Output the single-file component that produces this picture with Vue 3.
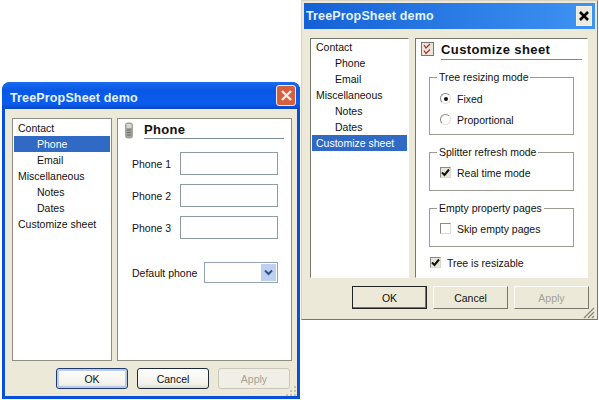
<template>
  <div class="desk">
    <!-- XP themed window -->
    <div class="win win--xp">
      <header class="win__title">
        <span class="win__caption">TreePropSheet demo</span>
        <button class="close close--xp" type="button">
          <svg width="13" height="13" viewBox="0 0 13 13"><path d="M2 2l9 9M11 2l-9 9" stroke="#fbe9e0" stroke-width="2.4" fill="none" /></svg>
        </button>
      </header>
      <div class="win__body">
        <div class="panes">
          <ul class="tree">
            <li v-for="item in tree" :key="item.label" class="tree__item" :class="{ 'tree__item--sub': item.sub, 'tree__item--active': item.label === 'Phone' }">
              {{ item.label }}
            </li>
          </ul>
          <div class="page">
            <div class="page__head">
              <svg class="page__icon" width="10" height="17" viewBox="0 0 10 17">
                <rect x="1" y="0.5" width="8" height="16" rx="3" fill="#a5a29b" />
                <rect x="2.5" y="2" width="5" height="4" fill="#d9d7d0" />
                <path d="M3 8h4M3 10.500h4M3 13h4" stroke="#6f6d68" stroke-width="1" />
              </svg>
              <h3 class="page__title">Phone</h3>
            </div>
            <div class="phones">
              <div v-for="n in 3" :key="n" class="phone-row">
                <label>Phone {{ n }}</label>
                <span class="input"></span>
              </div>
            </div>
            <div class="default-row">
              <label>Default phone</label>
              <span class="combo">
                <span class="combo__btn">
                  <svg width="9" height="7" viewBox="0 0 9 7"><path d="M1 1.500l3.500 3.500l3.500-3.500" stroke="#33508f" stroke-width="2" fill="none" /></svg>
                </span>
              </span>
            </div>
          </div>
        </div>
        <div class="buttons buttons--xp">
          <button type="button" class="btn btn--default">OK</button>
          <button type="button" class="btn">Cancel</button>
          <button type="button" class="btn btn--off">Apply</button>
        </div>
        <svg class="grip" width="12" height="12" viewBox="0 0 12 12">
          <path d="M9 2h2v2h-2zM5 6h2v2h-2zM9 6h2v2h-2zM1 10h2v2h-2zM5 10h2v2h-2zM9 10h2v2h-2z" fill="#c5c2b2" />
        </svg>
      </div>
    </div>

    <!-- classic themed window -->
    <div class="win win--classic">
      <header class="win__title">
        <span class="win__caption">TreePropSheet demo</span>
        <button class="close close--classic" type="button">
          <svg width="12" height="12" viewBox="0 0 12 12"><path d="M2 2l8 8M10 2l-8 8" stroke="#000" stroke-width="2.600" fill="none" /></svg>
        </button>
      </header>
      <div class="win__body">
        <div class="panes">
          <ul class="tree tree--sunken">
            <li v-for="item in tree" :key="item.label" class="tree__item" :class="{ 'tree__item--sub': item.sub, 'tree__item--active': item.label === 'Customize sheet' }">
              {{ item.label }}
            </li>
          </ul>
          <div class="page page--sunken">
            <div class="page__head">
              <svg class="page__icon" width="13" height="14" viewBox="0 0 13 14">
                <rect x="0.500" y="0.500" width="12" height="13" fill="#e9e6dc" stroke="#77746c" />
                <path d="M3 3l2 3l4-4M3 8.500l2 3l4-4" stroke="#a8343a" stroke-width="1.300" fill="none" />
              </svg>
              <h3 class="page__title">Customize sheet</h3>
            </div>
            <fieldset class="group group--tall">
              <legend>Tree resizing mode</legend>
              <div class="opt"><span class="radio radio--on"></span>Fixed</div>
              <div class="opt"><span class="radio"></span>Proportional</div>
            </fieldset>
            <fieldset class="group">
              <legend>Splitter refresh mode</legend>
              <div class="opt">
                <span class="check">
                  <svg width="9" height="9" viewBox="0 0 9 9"><path d="M1 4.500l2.500 2.500l4.500-5.500" stroke="#111" stroke-width="2" fill="none" /></svg>
                </span>
                Real time mode
              </div>
            </fieldset>
            <fieldset class="group">
              <legend>Empty property pages</legend>
              <div class="opt"><span class="check check--off"></span>Skip empty pages</div>
            </fieldset>
            <div class="opt opt--plain">
              <span class="check">
                <svg width="9" height="9" viewBox="0 0 9 9"><path d="M1 4.500l2.500 2.500l4.500-5.500" stroke="#111" stroke-width="2" fill="none" /></svg>
              </span>
              Tree is resizable
            </div>
          </div>
        </div>
        <div class="buttons buttons--classic">
          <button type="button" class="btn btn--default">OK</button>
          <button type="button" class="btn">Cancel</button>
          <button type="button" class="btn btn--off">Apply</button>
        </div>
        <svg class="grip" width="13" height="13" viewBox="0 0 13 13">
          <path d="M12 2L2 12M12 6L6 12M12 10L10 12" stroke="#8a8778" stroke-width="1.300" fill="none" />
        </svg>
      </div>
    </div>
  </div>
</template>

<script setup>
const tree = [
  { label: "Contact" },
  { label: "Phone", sub: true },
  { label: "Email", sub: true },
  { label: "Miscellaneous" },
  { label: "Notes", sub: true },
  { label: "Dates", sub: true },
  { label: "Customize sheet" }
];
</script>

<style>
html,
body {
  background: #fff;
}
</style>

<style scoped>
.desk {
  position: relative;
  width: 599px;
  height: 400px;
  overflow: hidden;
  font-family: "Liberation Sans", Arial, sans-serif;
  font-size: 10.500px;
  color: #111;
}

.win {
  position: absolute;
  display: flex;
  flex-direction: column;
  box-sizing: border-box;
}

.win--xp {
  left: 2px;
  top: 82px;
  width: 298px;
  height: 317px;
  border-radius: 8px 8px 0 0;
  background: #0a4fd8;
  padding: 0 3px 3px;
}

.win--classic {
  left: 301px;
  top: 0;
  width: 297px;
  height: 320px;
  background: #ece9d8;
  border: 1px solid #d8d5c6;
  border-right-color: #77766c;
  border-bottom-color: #77766c;
  padding: 2px 2px 0;
}

.win__title {
  display: flex;
  align-items: center;
  justify-content: space-between;
  flex: none;
}

.win--xp .win__title {
  height: 27px;
  padding: 0 4px 0 8px;
  margin: 0 -3px;
  border-radius: 8px 8px 0 0;
  background: linear-gradient(#1a6cf0, #0a57e4 30%, #0a5cf0 80%, #0a48c4);
}

.win--xp .win__caption {
  padding-top: 4px;
}

.win--classic .win__title {
  height: 26px;
  padding: 0 3px 0 2px;
  background: linear-gradient(90deg, #1461d6, #3f93f2);
}

.win__caption {
  font-size: 12.500px;
  font-weight: 700;
  letter-spacing: 0.150px;
  color: #e4f4ff;
}

.close {
  display: flex;
  align-items: center;
  justify-content: center;
  padding: 0;
  box-sizing: border-box;
}

.close--xp {
  width: 20px;
  height: 21px;
  border: 1px solid #eee;
  border-radius: 3px;
  background: #d5603f;
}

.close--classic {
  width: 16px;
  height: 20px;
  border: 1px solid #f4f2e8;
  background: #eceadf;
}

.win__body {
  position: relative;
  flex: 1;
  display: flex;
  flex-direction: column;
  background: #ece9d8;
  min-height: 0;
}

.win--xp .win__body {
  padding: 9px 5px 0 7px;
}

.win--classic .win__body {
  padding: 9px 7px 0 6px;
}

.panes {
  display: flex;
  gap: 5px;
}

.win--xp .panes {
  height: 243px;
}

.win--classic .panes {
  height: 240px;
  gap: 6px;
}

.tree {
  list-style: none;
  margin: 0;
  padding: 1px;
  flex: none;
  box-sizing: border-box;
  background: #fff;
  border: 1px solid #8d8d85;
}

.win--xp .tree {
  width: 100px;
}

.win--classic .tree {
  width: 99px;
}

.tree--sunken {
  border-color: #77766c #fff #fff #77766c;
  padding-top: 0;
}

.tree__item {
  height: 16px;
  line-height: 16px;
  padding-left: 4px;
  white-space: nowrap;
}

.tree__item--sub {
  padding-left: 23px;
}

.tree__item--active {
  background: #316ac5;
  color: #fff;
}

.page {
  position: relative;
  flex: 1;
  box-sizing: border-box;
  background: #fff;
  border: 1px solid #8d8d85;
  padding: 3px 7px 0 6px;
}

.page--sunken {
  border-color: #77766c #fff #fff #77766c;
  padding: 3px 5px 0 5px;
}

.page__head {
  display: flex;
  align-items: flex-start;
}

.page__icon {
  flex: none;
}

.page__title {
  flex: 1;
  margin: 0 0 0 10px;
  height: 16px;
  line-height: 15px;
  border-bottom: 1px solid #7b8a94;
  font-size: 13px;
  font-weight: 700;
  letter-spacing: 0.300px;
}

.page--sunken .page__title {
  margin-left: 7px;
  height: 17px;
  letter-spacing: 0.400px;
}

.phones {
  display: flex;
  flex-direction: column;
  gap: 9px;
  margin: 13px 6px 0 8px;
}

.phone-row,
.default-row {
  display: flex;
  align-items: center;
  justify-content: space-between;
}

.input {
  width: 98px;
  height: 23px;
  box-sizing: border-box;
  border: 1px solid #8f9a9e;
}

.default-row {
  margin: 23px 6px 0 8px;
}

.default-row label {
  white-space: nowrap;
}

.combo {
  display: flex;
  justify-content: flex-end;
  align-items: center;
  width: 74px;
  height: 21px;
  padding: 1px;
  box-sizing: border-box;
  border: 1px solid #94a3b4;
}

.combo__btn {
  display: flex;
  align-items: center;
  justify-content: center;
  width: 15px;
  height: 17px;
  background: #bdd0f0;
}

.group {
  margin: 11px 8px 0 8px;
  padding: 3px 0 0 10px;
  border: 1px solid #9a9a92;
  height: 45px;
  box-sizing: border-box;
  min-width: 0;
}

.group--tall {
  height: 64px;
  padding-top: 4px;
}

.group legend {
  padding: 0 2px;
  margin-left: -3px;
  line-height: 13px;
  height: 13px;
  font-size: 10.500px;
}

.opt {
  display: flex;
  align-items: center;
  gap: 6px;
  height: 21px;
}

.opt--plain {
  margin: 5px 0 0 9px;
}

.radio {
  position: relative;
  width: 11px;
  height: 11px;
  box-sizing: border-box;
  border: 1px solid #8b8b84;
  border-right-color: #e4e2d8;
  border-bottom-color: #e4e2d8;
  border-radius: 50%;
}

.radio--on::after {
  content: "";
  position: absolute;
  left: 2.500px;
  top: 2.500px;
  width: 4px;
  height: 4px;
  border-radius: 50%;
  background: #111;
}

.check {
  display: flex;
  align-items: center;
  justify-content: center;
  width: 11px;
  height: 11px;
  box-sizing: border-box;
  border: 1px solid #8b8b84;
  border-right-color: #dcdad0;
  border-bottom-color: #dcdad0;
  background: #e8e6da;
}

.check--off {
  background: #fff;
}

.buttons {
  display: flex;
  justify-content: flex-end;
}

.buttons--xp {
  gap: 9px;
  margin: 7px 0 0;
  padding-right: 2px;
}

.buttons--classic {
  gap: 6px;
  margin: 8px -1px 0 0;
}

.btn {
  height: 21px;
  width: 72px;
  padding: 0;
  font-family: inherit;
  font-size: 10.500px;
  color: #111;
  box-sizing: border-box;
}

.buttons--xp .btn {
  border: 1px solid #1c2a3a;
  border-radius: 3px;
  background: linear-gradient(#fff, #f2f1ea 80%, #dedbcd);
}

.buttons--xp .btn--default {
  box-shadow: inset 0 0 0 2px #b9cdeb;
  border-color: #1f3a6a;
}

.buttons--xp .btn--off {
  border-color: #c9c7ba;
  background: #f1efe5;
  color: #a5a294;
}

.buttons--classic .btn {
  width: 75px;
  height: 23px;
  background: #ece9d8;
  border: 1px solid;
  border-color: #fbfaf4 #77766c #77766c #fbfaf4;
}

.buttons--classic .btn--default {
  border: 1px solid #222;
  box-shadow: inset -1px -1px 0 #77766c;
}

.buttons--classic .btn--off {
  color: #a5a294;
}

.grip {
  position: absolute;
  right: 0;
  bottom: 0;
}
</style>
